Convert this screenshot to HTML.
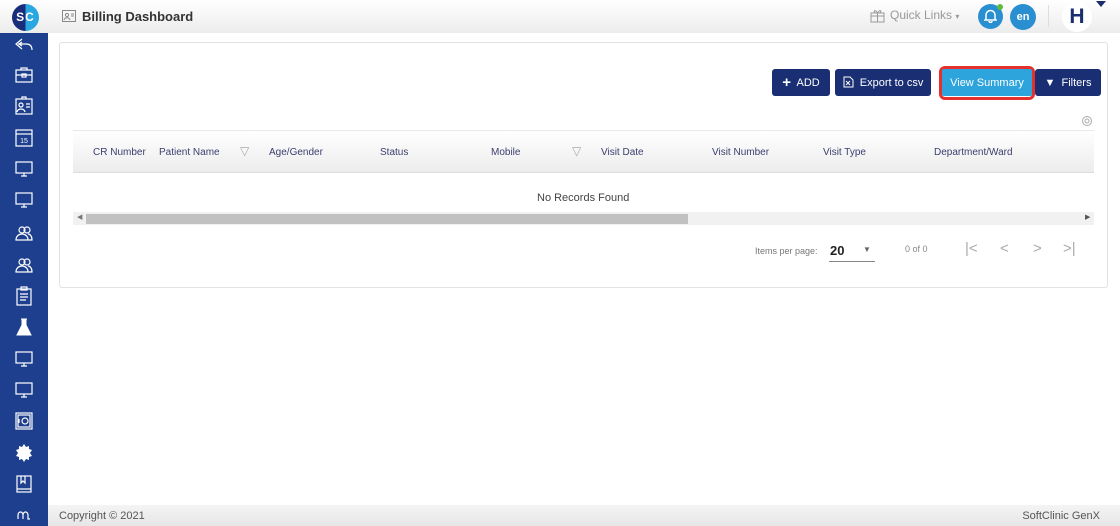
<!DOCTYPE html>
<html><head><meta charset="utf-8"><style>
*{margin:0;padding:0;box-sizing:border-box}
body{width:1120px;height:526px;overflow:hidden;position:relative;background:#fff;font-family:"Liberation Sans",sans-serif;}
.hdr{position:absolute;left:0;top:0;width:1120px;height:33px;background:linear-gradient(#fff,#ececec);}
.side{position:absolute;left:0;top:33px;width:48px;height:493px;background:#1e3f8e;}
.ic{position:absolute;left:14px;width:20px;height:20px}
.foot{position:absolute;left:48px;top:505px;width:1072px;height:21px;background:linear-gradient(#f4f4f4,#e6e6e6);font-size:11px;color:#555;}
.card{position:absolute;left:59px;top:42px;width:1049px;height:246px;border:1px solid #e2e2e2;border-radius:3px;background:#fff}
.btn{position:absolute;top:69px;height:27px;background:#1a2f73;color:#fff;font-size:11px;border-radius:3px;line-height:28px;text-align:center}
.th{position:absolute;top:147px;font-size:10px;color:#3a3f6e}
.t{position:absolute}
</style></head><body>
<div class="hdr">
  <div class="t" style="left:12px;top:4px;width:27px;height:27px;border-radius:50%;background:linear-gradient(90deg,#1a2d7a 50%,#29a7e0 50%);color:#fff;font-weight:bold;font-size:12px;line-height:27px;text-align:center;letter-spacing:1px">SC</div>
  <svg class="t" style="left:62px;top:9px" width="14" height="13" viewBox="0 0 14 13"><rect x="0.5" y="1.5" width="13" height="11" fill="none" stroke="#888"/><circle cx="5" cy="6" r="1.6" fill="none" stroke="#888"/><path d="M2 11c1-3 5-3 6 0M9 5h3M9 7h3" stroke="#888" fill="none"/></svg>
  <div class="t" style="left:82px;top:9px;font-size:13px;font-weight:bold;color:#333">Billing Dashboard</div>
  <svg class="t" style="left:870px;top:8px" width="15" height="15" viewBox="0 0 15 15"><rect x="1" y="5" width="13" height="9" fill="none" stroke="#999"/><path d="M1 8h13M7.5 5v9M7.5 5C5 1 3 3 5 5M7.5 5C10 1 12 3 10 5" fill="none" stroke="#999"/></svg>
  <div class="t" style="left:890px;top:8px;font-size:12px;color:#999">Quick Links <span style="font-size:8px">▾</span></div>
  <div class="t" style="left:978px;top:4px;width:25px;height:25px;border-radius:50%;background:#2a8fd0"></div>
  <svg class="t" style="left:984px;top:9px" width="13" height="14" viewBox="0 0 13 14"><path d="M2 10V6a4.5 4.5 0 0 1 9 0v4l1 1H1z M5 12a1.5 1.5 0 0 0 3 0" fill="none" stroke="#fff" stroke-width="1.5"/></svg>
  <div class="t" style="left:997px;top:4px;width:6px;height:6px;border-radius:50%;background:#5dbb3f"></div>
  <div class="t" style="left:1010px;top:4px;width:26px;height:26px;border-radius:50%;background:#2a8fd0;color:#fff;font-size:11px;font-weight:bold;line-height:26px;text-align:center">en</div>
  <div class="t" style="left:1048px;top:5px;width:1px;height:22px;background:#ddd"></div>
  <div class="t" style="left:1062px;top:2px;width:30px;height:30px;border-radius:50%;background:#fff;color:#1a2d6e;font-size:21px;font-weight:bold;line-height:30px;text-align:center">H</div>
  <div class="t" style="left:1096px;top:1px;width:0;height:0;border-left:5px solid transparent;border-right:5px solid transparent;border-top:6px solid #1a2d6e"></div>
</div>
<div class="side">
<svg class="ic" style="top:2px" viewBox="0 0 20 20" fill="none" stroke="#fff" stroke-width="1.2"><path d="M8 4L2 9l6 5M4 9h8c4 0 6 2 6 6M8 7l-3 2 3 2"/></svg>
<svg class="ic" style="top:32px" viewBox="0 0 20 20" fill="none" stroke="#fff" stroke-width="1.2"><rect x="2" y="5" width="16" height="12"/><path d="M7 5V3h6v2M2 10h16"/><rect x="8" y="9" width="4" height="3"/></svg>
<svg class="ic" style="top:63px" viewBox="0 0 20 20" fill="none" stroke="#fff" stroke-width="1.2"><rect x="2" y="3" width="16" height="15"/><circle cx="7" cy="9" r="2"/><path d="M3 16c1-4 7-4 8 0M12 8h4M12 11h4M8 3V1h4v2"/></svg>
<svg class="ic" style="top:95px" viewBox="0 0 20 20" fill="none" stroke="#fff" stroke-width="1.2"><rect x="2" y="2" width="16" height="16"/><path d="M2 6h16"/><text x="10" y="15" font-size="7" fill="#fff" stroke="none" text-anchor="middle" font-family="Liberation Sans">15</text></svg>
<svg class="ic" style="top:126px" viewBox="0 0 20 20" fill="none" stroke="#fff" stroke-width="1.2"><rect x="2" y="3" width="16" height="11"/><path d="M10 14v3M7 17h6"/></svg>
<svg class="ic" style="top:157px" viewBox="0 0 20 20" fill="none" stroke="#fff" stroke-width="1.2"><rect x="2" y="3" width="16" height="11"/><path d="M10 14v3M7 17h6"/></svg>
<svg class="ic" style="top:190px" viewBox="0 0 20 20" fill="none" stroke="#fff" stroke-width="1.2"><circle cx="8" cy="7" r="3"/><circle cx="13" cy="7" r="3"/><path d="M2 17c0-4 3-6 6-6s6 2 6 6zM14 11c2 0 4 2 4 6h-4"/></svg>
<svg class="ic" style="top:222px" viewBox="0 0 20 20" fill="none" stroke="#fff" stroke-width="1.2"><circle cx="8" cy="7" r="3"/><circle cx="13" cy="7" r="3"/><path d="M2 17c0-4 3-6 6-6s6 2 6 6zM14 11c2 0 4 2 4 6h-4"/></svg>
<svg class="ic" style="top:253px" viewBox="0 0 20 20" fill="none" stroke="#fff" stroke-width="1.2"><rect x="3" y="3" width="14" height="16"/><rect x="7" y="1" width="6" height="3"/><path d="M6 8h8M6 11h8M6 14h6"/></svg>
<svg class="ic" style="top:284px" viewBox="0 0 20 20"><path d="M7 2h6M8 2v6L3 18h14L12 8V2z" fill="#fff" stroke="#fff"/></svg>
<svg class="ic" style="top:316px" viewBox="0 0 20 20" fill="none" stroke="#fff" stroke-width="1.2"><rect x="2" y="3" width="16" height="11"/><path d="M10 14v3M7 17h6"/></svg>
<svg class="ic" style="top:347px" viewBox="0 0 20 20" fill="none" stroke="#fff" stroke-width="1.2"><rect x="2" y="3" width="16" height="11"/><path d="M10 14v3M7 17h6"/></svg>
<svg class="ic" style="top:378px" viewBox="0 0 20 20" fill="none" stroke="#fff" stroke-width="1.2"><rect x="2" y="2" width="16" height="16"/><rect x="4" y="4" width="12" height="12"/><circle cx="11" cy="10" r="3"/><path d="M5 8v4"/></svg>
<svg class="ic" style="top:410px" viewBox="0 0 20 20"><path d="M10 1l2 3 3-1 0 3 3 1-2 3 2 3-3 1 0 3-3-1-2 3-2-3-3 1 0-3-3-1 2-3-2-3 3-1 0-3 3 1z" fill="#fff"/></svg>
<svg class="ic" style="top:441px" viewBox="0 0 20 20" fill="none" stroke="#fff" stroke-width="1.2"><rect x="3" y="2" width="14" height="16"/><path d="M3 15h14M7 2v7l2-2 2 2V2"/></svg>
<svg class="ic" style="top:472px" viewBox="0 0 20 20" fill="none" stroke="#fff" stroke-width="1.2"><path d="M4 14V10a2.5 3 0 0 1 5 0v4M9 10a2.5 3 0 0 1 5 0v4h2"/></svg>
</div>
<div class="card"></div>
<div class="btn" style="left:772px;width:58px"><b style="font-size:15px;vertical-align:-1px">+</b>&nbsp; ADD</div>
<div class="btn" style="left:835px;width:96px"><svg width="11" height="12" viewBox="0 0 11 12" style="vertical-align:-2px"><path d="M1 1h6l3 3v7H1z M3 5l4 4M7 5l-4 4" fill="none" stroke="#fff"/></svg>&nbsp; Export to csv</div>
<div class="t" style="left:939px;top:66px;width:96px;height:34px;border:3px solid #e5312e;border-radius:6px"></div>
<div class="btn" style="left:942px;width:90px;background:#2ea4dc;top:69px;height:27px;border-radius:2px">View Summary</div>
<div class="btn" style="left:1035px;width:66px"><span style="font-size:11px">▼</span>&nbsp; Filters</div>
<svg class="t" style="left:1080px;top:114px" width="14" height="14" viewBox="0 0 14 14"><circle cx="7" cy="7" r="4.5" fill="none" stroke="#aaa"/><circle cx="7" cy="7" r="2" fill="none" stroke="#aaa"/></svg>
<div class="t" style="left:73px;top:130px;width:1021px;height:43px;background:linear-gradient(#fff,#ececec);border-top:1px solid #e8e8e8;border-bottom:1px solid #ddd"></div>
<div class="th" style="left:93px">CR Number</div>
<div class="th" style="left:159px">Patient Name</div>
<div class="th" style="left:240px;color:#aaa;font-size:12px;top:144px">▽</div>
<div class="th" style="left:269px">Age/Gender</div>
<div class="th" style="left:380px">Status</div>
<div class="th" style="left:491px">Mobile</div>
<div class="th" style="left:572px;color:#aaa;font-size:12px;top:144px">▽</div>
<div class="th" style="left:601px">Visit Date</div>
<div class="th" style="left:712px">Visit Number</div>
<div class="th" style="left:823px">Visit Type</div>
<div class="th" style="left:934px">Department/Ward</div>
<div class="t" style="left:537px;top:192px;font-size:11px;color:#444">No Records Found</div>
<div class="t" style="left:73px;top:212px;width:1021px;height:13px;background:#f1f1f1"></div>
<div class="t" style="left:86px;top:214px;width:602px;height:10px;background:#c1c1c1"></div>
<div class="t" style="left:77px;top:213px;font-size:7px;color:#777">◀</div>
<div class="t" style="left:1085px;top:213px;font-size:7px;color:#555">▶</div>
<div class="t" style="left:755px;top:246px;font-size:9px;color:#777">Items per page:</div>
<div class="t" style="left:830px;top:243px;font-size:13px;font-weight:bold;color:#222">20</div>
<div class="t" style="left:863px;top:245px;font-size:8px;color:#666">▼</div>
<div class="t" style="left:829px;top:261px;width:46px;height:1px;background:#888"></div>
<div class="t" style="left:905px;top:244px;font-size:9px;color:#888">0 of 0</div>
<div class="t" style="left:965px;top:240px;font-size:15px;color:#aaa">|&lt;</div>
<div class="t" style="left:1000px;top:240px;font-size:15px;color:#aaa">&lt;</div>
<div class="t" style="left:1033px;top:240px;font-size:15px;color:#aaa">&gt;</div>
<div class="t" style="left:1063px;top:240px;font-size:15px;color:#aaa">&gt;|</div>
<div class="foot"><span class="t" style="left:11px;top:5px">Copyright © 2021</span><span class="t" style="right:20px;top:5px">SoftClinic GenX</span></div>
</body></html>
